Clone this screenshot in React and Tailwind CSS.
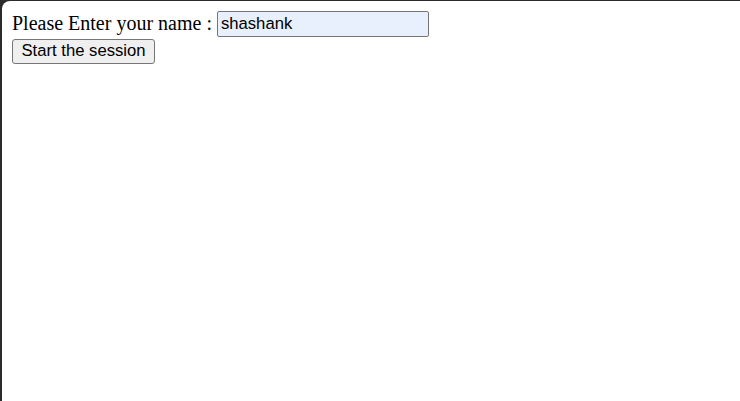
export default function App() {
  return (
    <div className="h-[401px] w-[740px] bg-[#2b2b2b] pt-px pl-[2px] overflow-hidden">
      <div className="h-full w-full bg-white rounded-tl-[8px] p-[10px]">
        <div className="flex items-start h-[27px] text-[20px] text-black font-['Liberation_Serif',serif]">
          <span className="leading-[24px] whitespace-pre">Please Enter your name : </span>
          <input
            type="text"
            defaultValue="shashank"
            className="h-[26px] w-[212px] border border-[#767676] rounded-[2px] bg-[#e8f0fe] px-[3px] text-[16.67px] font-['Liberation_Sans',Arial,sans-serif] text-black outline-none"
          />
        </div>
        <button className="h-[25px] w-[143px] border border-[#767676] rounded-[3px] bg-[#efefef] text-[16.67px] leading-none font-['Liberation_Sans',Arial,sans-serif] text-black">
          Start the session
        </button>
      </div>
    </div>
  );
}
